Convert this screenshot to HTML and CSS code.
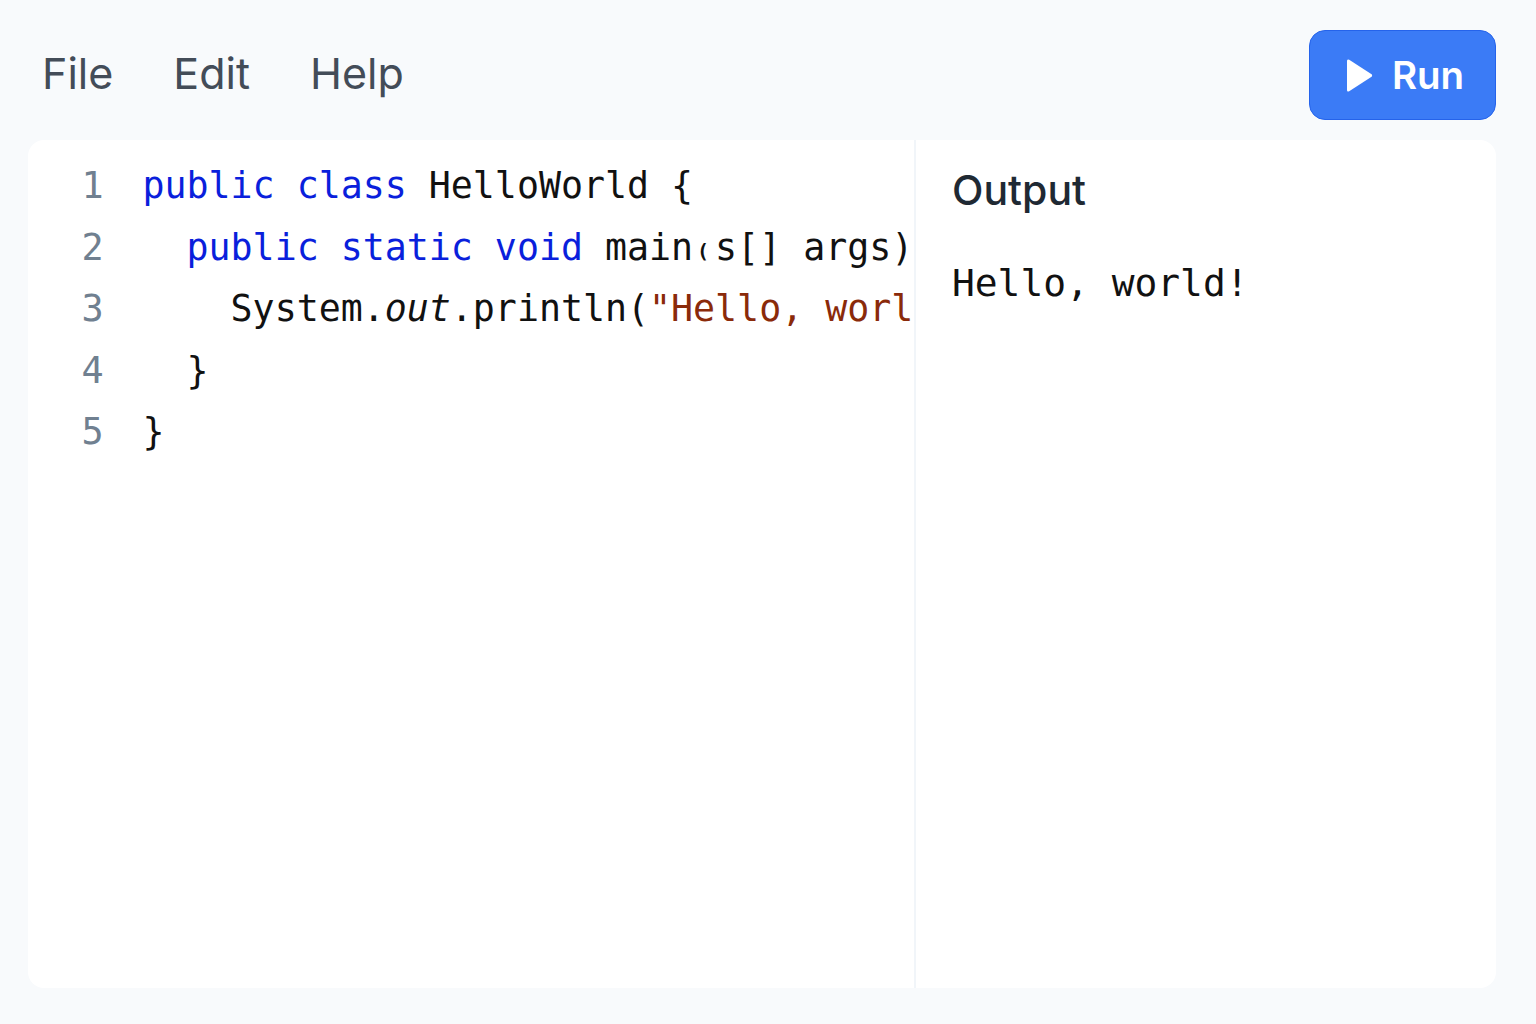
FILE: index.html
```html
<!DOCTYPE html>
<html lang="en">
<head>
<meta charset="utf-8">
<title>Java Runner</title>
<link rel="stylesheet" href="styles.css">
</head>
<body>
<div class="app">
  <header class="toolbar">
    <nav class="menu">
      <span class="menu-item">File</span>
      <span class="menu-item">Edit</span>
      <span class="menu-item">Help</span>
    </nav>
    <button class="run" type="button">
      <svg class="run-icon" viewBox="1 1.8 23.8 28.4" preserveAspectRatio="none" aria-hidden="true"><path d="M3 2.5 L23.5 15 Q24.5 16 23.5 17 L3 29.5 Q1 30.5 1 28.5 V3.5 Q1 1.5 3 2.5 Z"/></svg>
      <span>Run</span>
    </button>
  </header>
  <main class="panel">
    <section class="editor">
      <div class="gutter">
        <div>1</div><div>2</div><div>3</div><div>4</div><div>5</div>
      </div>
      <pre class="code"><span class="kw">public class</span> HelloWorld {
  <span class="kw">public static void</span> main<span class="paren">(</span>s[] args)
    System.<i>out</i>.println(<span class="str">"Hello, world!"</span>);
  }
}</pre>
    </section>
    <aside class="output">
      <h2 class="output-title">Output</h2>
      <pre class="output-text">Hello, world!</pre>
    </aside>
  </main>
</div>
</body>
</html>
```
FILE: styles.css
```css
* { box-sizing: border-box; }
html, body { margin: 0; height: 100%; }
body { background: #f8fafc; font-family: Inter, "Liberation Sans", sans-serif; }
.app { height: 1024px; padding: 30px 40px 36px 28px; display: flex; flex-direction: column; gap: 20px; }
.toolbar { height: 90px; display: flex; align-items: center; justify-content: space-between; }
.menu { display: flex; gap: 60px; padding: 0 0 4px 14px; }
.menu-item { font-size: 43px; line-height: 54px; color: #434c58; }
.run { width: 187px; height: 90px; border: 1px solid #2563eb; border-radius: 16px; background: #3b7bf6; color: #fff; font-family: inherit; font-size: 38.5px; font-weight: 600; display: flex; align-items: center; justify-content: center; gap: 19px; padding: 0 0 0 6px; }
.run-icon { width: 26px; height: 33px; fill: #fff; }
.panel { flex: 1; min-height: 0; display: flex; background: #fff; border-radius: 16px; overflow: hidden; }
.editor { width: 888px; flex: none; display: flex; overflow: hidden; padding-top: 15px; border-right: 2px solid #f1f5f9; }
.gutter { width: 114.5px; flex: none; padding-left: 53.5px; color: #708090; font: 36.8px/61.5px "DejaVu Sans Mono", monospace; }
.code { margin: 0; color: #111; font: 36.6px/61.5px "DejaVu Sans Mono", monospace; overflow: hidden; flex: 1; }
.paren { display: inline-block; width: 22px; padding-left: 4px; line-height: 0; font-size: 20px; font-weight: 700; text-align: left; vertical-align: 2px; }
.kw { color: #0a1fdc; }
.str { color: #8a2a0a; }
.output { flex: 1; padding: 24px 36px; }
.output-title { margin: 0; font-size: 41px; line-height: 52px; font-weight: 500; color: #1f2933; }
.output-text { margin: 45px 0 0; color: #111; font: 37.9px/44px "DejaVu Sans Mono", monospace; }
```
